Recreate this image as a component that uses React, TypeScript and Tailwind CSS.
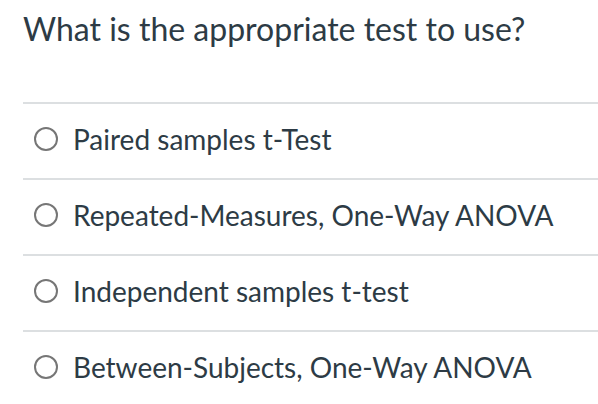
import React from "react";

const options = [
  "Paired samples t-Test",
  "Repeated-Measures, One-Way ANOVA",
  "Independent samples t-test",
  "Between-Subjects, One-Way ANOVA",
];

export default function App() {
  return (
    <div className="w-[598px] h-[404px] bg-white pl-[23px] font-['Lato',sans-serif] text-[#2d3b45] overflow-hidden">
      <div className="pt-[10px] h-[102px] text-[32px] leading-[38px]">What is the appropriate test to use?</div>
      <div className="flex flex-col">
        {options.map((o) => (
          <div key={o} className="h-[76px] border-t-2 border-[#dcdfe1] flex items-center pb-[4px] pl-[11px]">
            <span className="w-[24px] h-[24px] rounded-full border-2 border-[#767676] shrink-0" />
            <span className="ml-[15px] text-[28px] leading-none">{o}</span>
          </div>
        ))}
      </div>
    </div>
  );
}
